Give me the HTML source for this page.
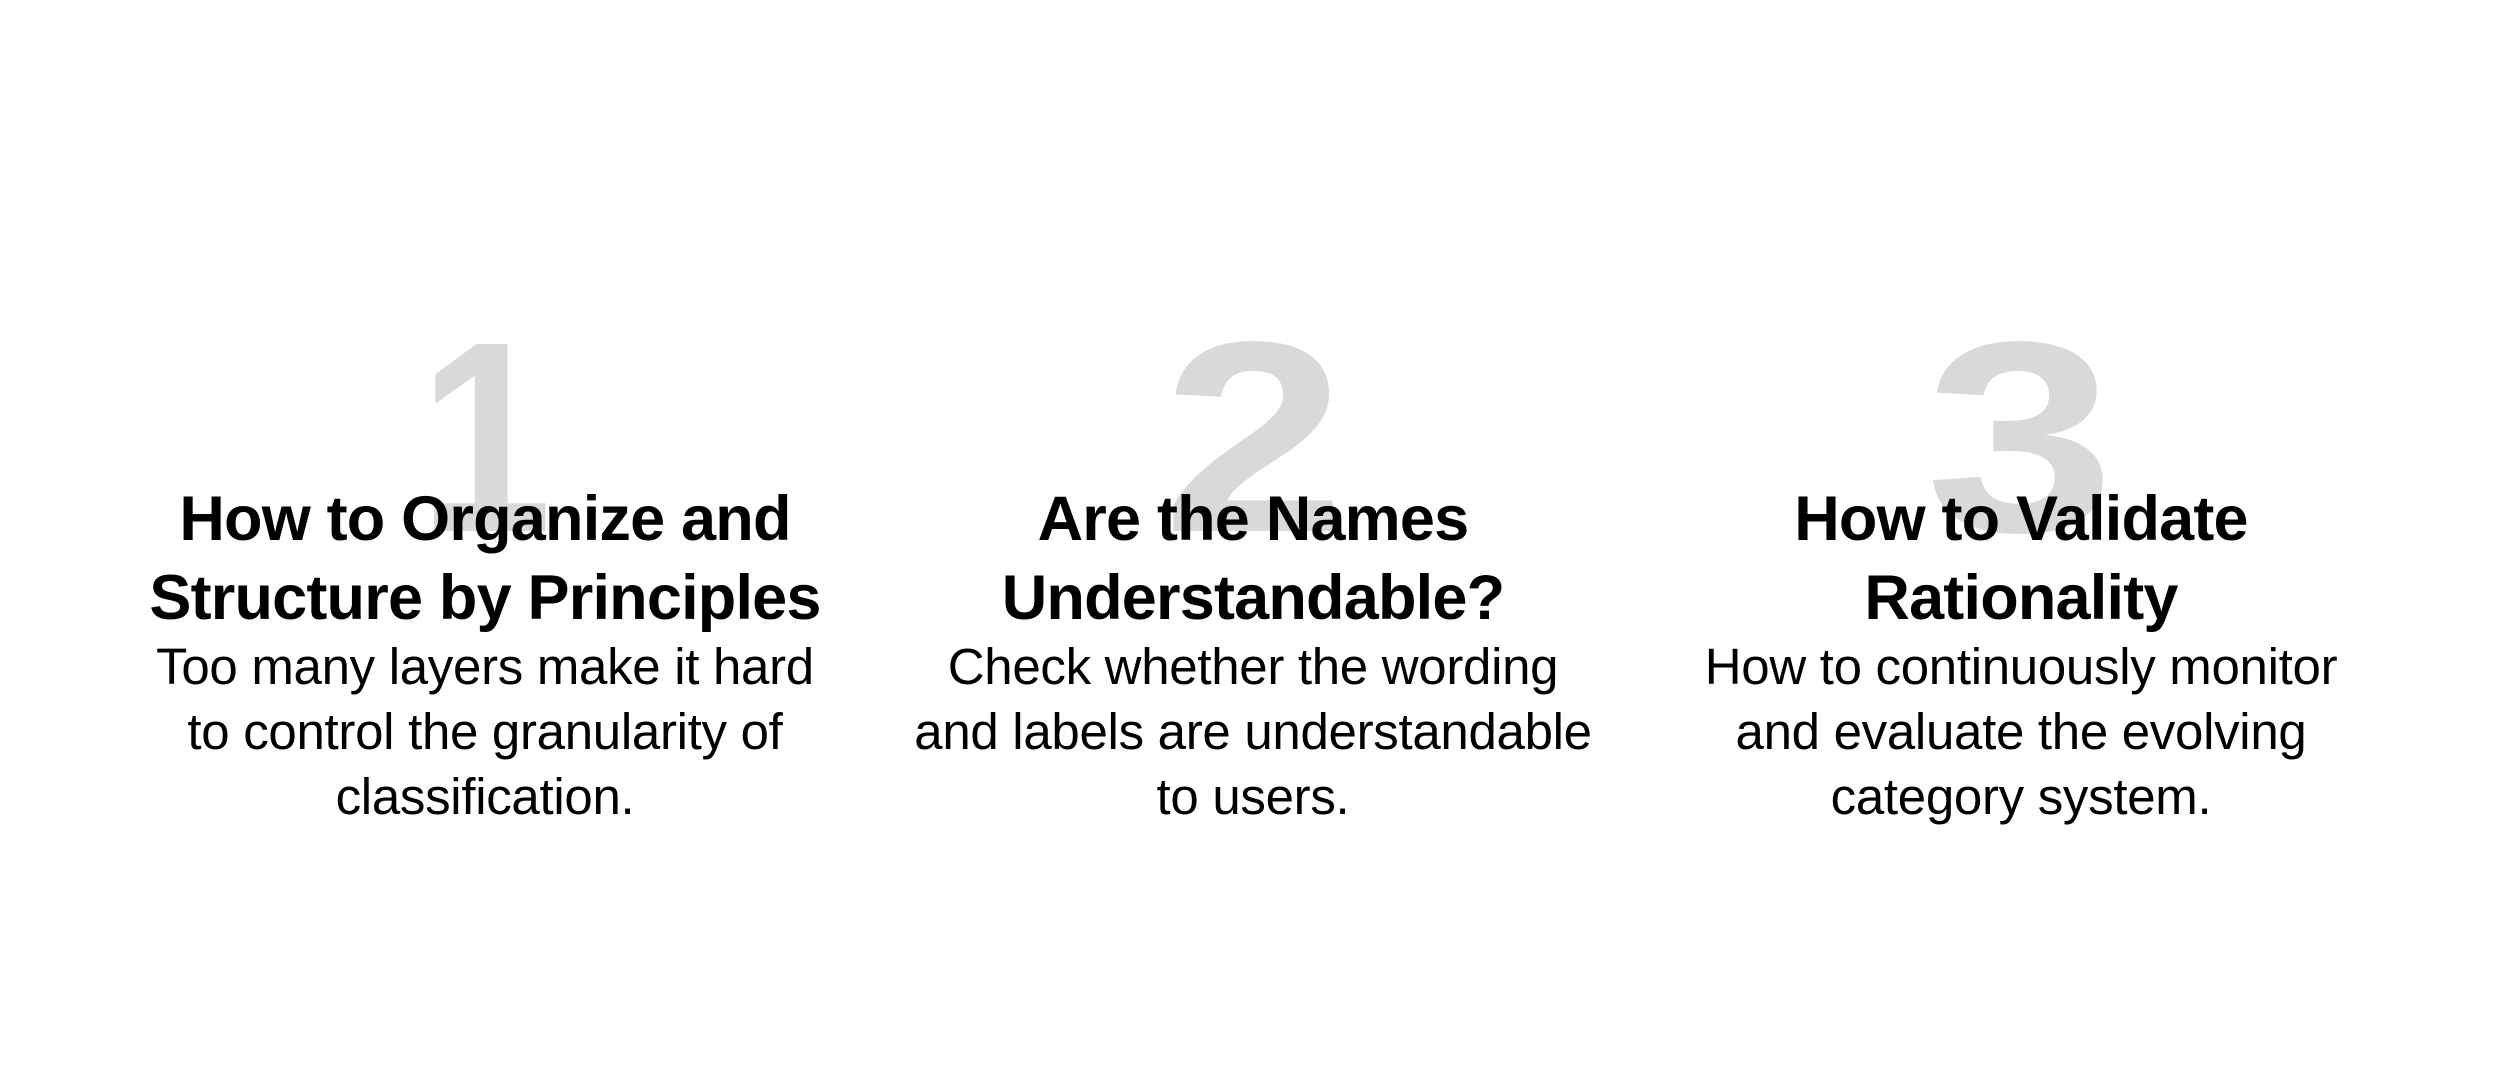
<!DOCTYPE html>
<html><head><meta charset="utf-8"><style>
html,body{margin:0;padding:0;background:#fff;}
body{width:2500px;height:1082px;position:relative;overflow:hidden;font-family:"Liberation Sans",sans-serif;}
svg.d{position:absolute;left:0;top:0;}
.t{position:absolute;width:768px;text-align:center;font-weight:900;font-size:63px;line-height:79px;letter-spacing:-0.8px;color:#000;top:480px;white-space:nowrap;}
.b{position:absolute;width:768px;text-align:center;font-size:51px;line-height:65px;color:#000;top:634px;white-space:nowrap;letter-spacing:-0.3px;}
</style></head><body>
<svg class="d" width="2500" height="1082">
<g fill="#d9d9d9" font-family="Liberation Sans, sans-serif" font-weight="bold" font-size="272">
<text x="419" y="531" textLength="133" lengthAdjust="spacingAndGlyphs">1</text>
<text x="1162" y="531" textLength="184" lengthAdjust="spacingAndGlyphs">2</text>
<text x="1925" y="531" textLength="190" lengthAdjust="spacingAndGlyphs">3</text>
</g></svg>
<div class="t" style="left:101px">How to Organize and<br>Structure by Principles</div>
<div class="t" style="left:869px">Are the Names<br>Understandable?</div>
<div class="t" style="left:1637px">How to Validate<br>Rationality</div>
<div class="b" style="left:101px">Too many layers make it hard<br>to control the granularity of<br>classification.</div>
<div class="b" style="left:869px">Check whether the wording<br>and labels are understandable<br>to users.</div>
<div class="b" style="left:1637px">How to continuously monitor<br>and evaluate the evolving<br>category system.</div>
</body></html>
